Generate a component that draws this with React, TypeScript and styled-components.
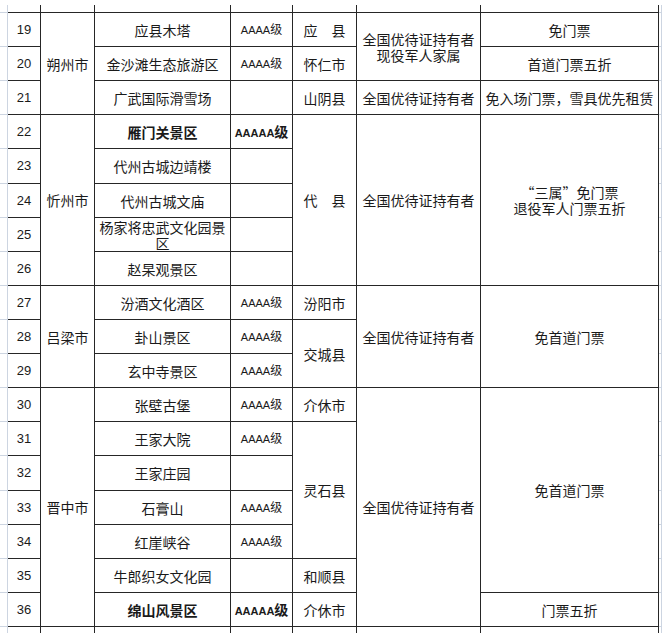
import React from "react";
import styled, { createGlobalStyle } from "styled-components";

const LINE = "#262626";
const GRID = "#cdd5e1";

// row tops measured on the sheet: first ruled line at y=12, rows ~34.1px
const tops = Array.from({ length: 19 }, (_, k) => Math.round(12 + k * 34.11));
const heights = tops.slice(1).map((t, i) => t - tops[i]);

const GlobalStyle = createGlobalStyle`
  html, body {
    margin: 0;
    padding: 0;
    background: #fff;
  }
  body {
    font-family: "Noto Sans CJK SC", "Noto Sans", sans-serif;
    color: #1a1a1a;
  }
`;

const Page = styled.div`
  padding-top: 5px;
`;

const Sheet = styled.table`
  border-collapse: separate;
  border-spacing: 0;
  table-layout: fixed;
  width: 662px;
`;

const Col = styled.col<{ $w: number }>`
  width: ${(p) => p.$w}px;
`;

const Row = styled.tr<{ $h: number }>`
  height: ${(p) => p.$h}px;
`;

const Gutter = styled.td<{ $tick?: boolean }>`
  padding: 0;
  border-right: 1px solid ${GRID};
  border-bottom: ${(p) => (p.$tick ? `1px solid ${GRID}` : "none")};
`;

const Stub = styled.td<{ $closed?: boolean }>`
  padding: 0;
  border-right: 1px solid ${LINE};
  border-bottom: ${(p) => (p.$closed ? `1px solid ${LINE}` : "none")};
`;

const Cell = styled.td<{ $bold?: boolean }>`
  padding: 0 2px;
  border-right: 1px solid ${LINE};
  border-bottom: 1px solid ${LINE};
  text-align: center;
  vertical-align: middle;
  font-size: 14px;
  line-height: 16px;
  font-weight: ${(p) => (p.$bold ? 700 : 400)};
  overflow: hidden;
`;

const No = styled(Cell)`
  font-family: "Liberation Sans", Arial, sans-serif;
  font-size: 13px;
`;

const Grade = styled(Cell)`
  font-size: 12px;
  white-space: nowrap;
`;

const Letters = styled.span`
  font-family: "Liberation Sans", Arial, sans-serif;
  font-size: 11px;
`;

const Ji = styled.span<{ $big?: boolean }>`
  font-size: ${(p) => (p.$big ? 14 : 12)}px;
`;

const Quote = styled.span`
  font-feature-settings: "fwid";
`;

const Level = ({ count, bold }: { count: number; bold?: boolean }) => (
  <Grade $bold={bold}>
    <Letters>{"A".repeat(count)}</Letters>
    <Ji $big={bold}>级</Ji>
  </Grade>
);

const SheetRow = ({ h, children }: { h: number; children: React.ReactNode }) => (
  <Row $h={h}>
    <Gutter $tick />
    {children}
    <Gutter $tick />
  </Row>
);

const EdgeRow = ({ h, closed }: { h: number; closed?: boolean }) => (
  <Row $h={h}>
    <Gutter $tick={closed} />
    {Array.from({ length: 7 }, (_, i) => (
      <Stub key={i} $closed={closed} />
    ))}
    <Gutter $tick={closed} />
  </Row>
);

const ELIGIBLE = "全国优待证持有者";

export default function App() {
  return (
    <Page>
      <GlobalStyle />
      <Sheet>
        <colgroup>
          <Col $w={8} />
          <Col $w={33} />
          <Col $w={54} />
          <Col $w={136} />
          <Col $w={62} />
          <Col $w={64} />
          <Col $w={124} />
          <Col $w={178} />
          <Col $w={3} />
        </colgroup>
        <tbody>
          <EdgeRow h={8} closed />

          <SheetRow h={heights[0]}>
            <No>19</No>
            <Cell rowSpan={3}>朔州市</Cell>
            <Cell>应县木塔</Cell>
            <Level count={4} />
            <Cell>应　县</Cell>
            <Cell rowSpan={2}>
              {ELIGIBLE}
              <br />
              现役军人家属
            </Cell>
            <Cell>免门票</Cell>
          </SheetRow>
          <SheetRow h={heights[1]}>
            <No>20</No>
            <Cell>金沙滩生态旅游区</Cell>
            <Level count={4} />
            <Cell>怀仁市</Cell>
            <Cell>首道门票五折</Cell>
          </SheetRow>
          <SheetRow h={heights[2]}>
            <No>21</No>
            <Cell>广武国际滑雪场</Cell>
            <Grade />
            <Cell>山阴县</Cell>
            <Cell>{ELIGIBLE}</Cell>
            <Cell>免入场门票，雪具优先租赁</Cell>
          </SheetRow>

          <SheetRow h={heights[3]}>
            <No>22</No>
            <Cell rowSpan={5}>忻州市</Cell>
            <Cell $bold>雁门关景区</Cell>
            <Level count={5} bold />
            <Cell rowSpan={5}>代　县</Cell>
            <Cell rowSpan={5}>{ELIGIBLE}</Cell>
            <Cell rowSpan={5}>
              <Quote>“</Quote>三属<Quote>”</Quote>免门票
              <br />
              退役军人门票五折
            </Cell>
          </SheetRow>
          <SheetRow h={heights[4]}>
            <No>23</No>
            <Cell>代州古城边靖楼</Cell>
            <Grade />
          </SheetRow>
          <SheetRow h={heights[5]}>
            <No>24</No>
            <Cell>代州古城文庙</Cell>
            <Grade />
          </SheetRow>
          <SheetRow h={heights[6]}>
            <No>25</No>
            <Cell>杨家将忠武文化园景区</Cell>
            <Grade />
          </SheetRow>
          <SheetRow h={heights[7]}>
            <No>26</No>
            <Cell>赵杲观景区</Cell>
            <Grade />
          </SheetRow>

          <SheetRow h={heights[8]}>
            <No>27</No>
            <Cell rowSpan={3}>吕梁市</Cell>
            <Cell>汾酒文化酒区</Cell>
            <Level count={4} />
            <Cell>汾阳市</Cell>
            <Cell rowSpan={3}>{ELIGIBLE}</Cell>
            <Cell rowSpan={3}>免首道门票</Cell>
          </SheetRow>
          <SheetRow h={heights[9]}>
            <No>28</No>
            <Cell>卦山景区</Cell>
            <Level count={4} />
            <Cell rowSpan={2}>交城县</Cell>
          </SheetRow>
          <SheetRow h={heights[10]}>
            <No>29</No>
            <Cell>玄中寺景区</Cell>
            <Level count={4} />
          </SheetRow>

          <SheetRow h={heights[11]}>
            <No>30</No>
            <Cell rowSpan={7}>晋中市</Cell>
            <Cell>张壁古堡</Cell>
            <Level count={4} />
            <Cell>介休市</Cell>
            <Cell rowSpan={7}>{ELIGIBLE}</Cell>
            <Cell rowSpan={6}>免首道门票</Cell>
          </SheetRow>
          <SheetRow h={heights[12]}>
            <No>31</No>
            <Cell>王家大院</Cell>
            <Level count={4} />
            <Cell rowSpan={4}>灵石县</Cell>
          </SheetRow>
          <SheetRow h={heights[13]}>
            <No>32</No>
            <Cell>王家庄园</Cell>
            <Grade />
          </SheetRow>
          <SheetRow h={heights[14]}>
            <No>33</No>
            <Cell>石膏山</Cell>
            <Level count={4} />
          </SheetRow>
          <SheetRow h={heights[15]}>
            <No>34</No>
            <Cell>红崖峡谷</Cell>
            <Level count={4} />
          </SheetRow>
          <SheetRow h={heights[16]}>
            <No>35</No>
            <Cell>牛郎织女文化园</Cell>
            <Grade />
            <Cell>和顺县</Cell>
          </SheetRow>
          <SheetRow h={heights[17]}>
            <No>36</No>
            <Cell $bold>绵山风景区</Cell>
            <Level count={5} bold />
            <Cell>介休市</Cell>
            <Cell>门票五折</Cell>
          </SheetRow>

          <EdgeRow h={6} />
        </tbody>
      </Sheet>
    </Page>
  );
}
